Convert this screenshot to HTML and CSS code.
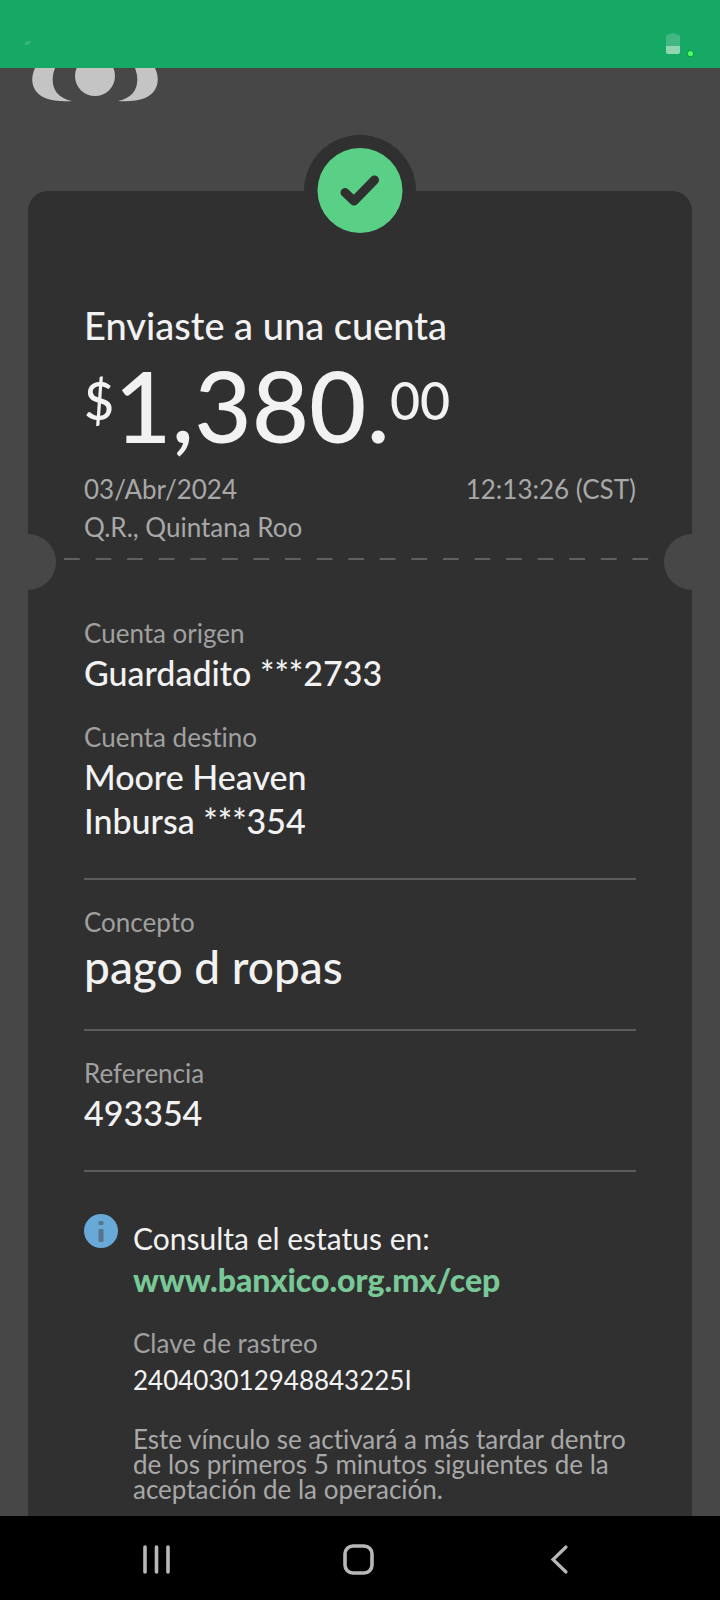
FILE: index.html
```html
<!DOCTYPE html>
<html lang="es">
<head>
<meta charset="utf-8">
<meta name="viewport" content="width=device-width, initial-scale=1">
<title>Comprobante de envío</title>
<link rel="stylesheet" href="styles.css">
</head>
<body>
<header class="status">
  <svg class="status-dot" width="8" height="6" viewBox="0 0 8 6" aria-hidden="true"><path d="M1 2Q5 0 7 1L6 4Q3 6 1 5Z" fill="#37b377"/></svg>
  <svg class="battery" width="30" height="26" viewBox="0 0 30 26" aria-hidden="true">
    <path d="M4 2.500Q4 1 7 1T10 2.500H12Q14 2.500 14 5V14H0V5Q0 2.500 2 2.500Z" fill="#43b783"/>
    <path d="M0 14H14V20Q14 22 12 22H2Q0 22 0 20Z" fill="#8fd6b0"/>
    <circle cx="24.500" cy="21.500" r="3.500" fill="#0da12f"/><circle cx="24.500" cy="21.500" r="2.600" fill="#4dfb69"/>
  </svg>
</header>
<main class="screen">
  <svg class="logo" width="126" height="34" viewBox="0 0 126 34" role="img" aria-label="Logotipo">
    <g fill="#c4c4c4">
      <path d="M3 0H23C18 13 20 29 40 33Q24 34 13 30C1 25-3 13 3 0Z"/>
      <path d="M123 0H103C108 13 106 29 86 33Q102 34 113 30C125 25 129 13 123 0Z"/>
      <circle cx="63" cy="8" r="20"/>
    </g>
  </svg>
  <article class="card">
    <div class="badge">
      <svg width="86" height="86" viewBox="0 0 86 86" role="img" aria-label="Enviado">
        <circle cx="43" cy="42.500" r="42.500" fill="#5ad087"/>
        <path d="M28 44.500L37 53L57.500 32" fill="none" stroke="#303030" stroke-width="9" stroke-linecap="round" stroke-linejoin="round"/>
      </svg>
    </div>
    <h1 class="title">Enviaste a una cuenta</h1>
    <p class="amount"><span class="amount-small">$</span><span class="amount-main">1,380.</span><span class="amount-small">00</span></p>
    <div class="when"><span>03/Abr/2024</span><span>12:13:26 (CST)</span></div>
    <p class="place">Q.R., Quintana Roo</p>
    <div class="perforation"></div>
    <dl class="details">
      <div class="group">
        <div><dt>Cuenta origen</dt><dd>Guardadito ***2733</dd></div>
        <div><dt>Cuenta destino</dt><dd>Moore Heaven</dd><dd>Inbursa ***354</dd></div>
      </div>
      <div class="group"><div><dt>Concepto</dt><dd class="concept">pago d ropas</dd></div></div>
      <div class="group"><div><dt>Referencia</dt><dd>493354</dd></div></div>
    </dl>
    <section class="info">
      <svg width="34" height="34" viewBox="0 0 34 34" aria-hidden="true">
        <circle cx="17" cy="17" r="17" fill="#68a9d8"/>
        <rect x="14.500" y="7" width="5" height="4" rx="1.500" fill="#57758b"/>
        <rect x="14.500" y="15" width="5" height="13" rx="1" fill="#57758b"/>
      </svg>
      <div class="info-body">
        <p class="info-title">Consulta el estatus en:</p>
        <a class="info-link" href="#cep">www.banxico.org.mx/cep</a>
        <p class="key-label">Clave de rastreo</p>
        <p class="key">240403012948843225I</p>
        <p class="note">Este vínculo se activará a más tardar dentro de los primeros 5 minutos siguientes de la aceptación de la operación.</p>
      </div>
    </section>
  </article>
</main>
<nav class="navbar">
  <button type="button" aria-label="Recientes"><svg width="32" height="32" viewBox="0 0 32 32"><path d="M4 3V28M15.500 3V28M27 3V28" stroke="#b8b8b8" stroke-width="3.600" stroke-linecap="round"/></svg></button>
  <button type="button" aria-label="Inicio"><svg width="32" height="32" viewBox="0 0 32 32"><rect x="2" y="2" width="27" height="27" rx="8" fill="none" stroke="#b8b8b8" stroke-width="3.600"/></svg></button>
  <button type="button" aria-label="Atrás"><svg width="32" height="32" viewBox="0 0 32 32"><path d="M22 3L9 15.500L22 28" fill="none" stroke="#b8b8b8" stroke-width="3.200" stroke-linecap="round"/></svg></button>
</nav>
</body>
</html>
```
FILE: styles.css
```css
* { box-sizing: border-box; }
body {
  margin: 0;
  min-height: 100vh;
  display: flex;
  flex-direction: column;
  background: #474747;
  color: #f2f2f2;
  font-family: Lato, "Open Sans", sans-serif;
  font-size: 26px;
  font-variant-ligatures: none;
}
h1, p, dl, dd { margin: 0; }
.status {
  height: 68px;
  padding: 32px 24px 0 24px;
  display: flex;
  justify-content: space-between;
  background: #16a865;
}
.status-dot { margin-top: 8px; }
.screen {
  flex: 1;
  display: flex;
  flex-direction: column;
  padding: 0 28px;
}
.logo { display: block; margin: 0 0 89px 4px; }
.card {
  position: relative;
  flex: 1;
  padding: 111px 56px 12px;
  border-radius: 20px 20px 0 0;
  background: #303030;
}
.badge {
  position: absolute;
  top: -56px;
  left: 50%;
  width: 112px;
  height: 112px;
  margin-left: -56px;
  padding: 13px;
  border-radius: 50%;
  background: #303030;
}
.badge svg { display: block; }
.title { font-size: 38px; line-height: 46px; font-weight: 500; }
.amount {
  display: flex;
  margin-top: 9px;
  font-weight: 500;
}
.amount-main { font-size: 99px; line-height: 96px; }
.amount-small { padding-top: 13px; font-size: 52px; line-height: 60px; }
.when {
  display: flex;
  justify-content: space-between;
  margin-top: 17px;
}
.when, .place { line-height: 38px; color: #a8a8a8; font-weight: 400; }
.perforation {
  position: relative;
  height: 2px;
  margin: 12px -28px 0 -20px;
  background: linear-gradient(90deg, #606060 50%, transparent 50%) 0 0 / 32px 2px round;
}
.perforation::before,
.perforation::after {
  content: "";
  position: absolute;
  top: -24px;
  width: 28px;
  height: 56px;
  background: #474747;
}
.perforation::before { left: -36px; border-radius: 0 28px 28px 0; }
.perforation::after { right: -28px; border-radius: 28px 0 0 28px; }
.details { padding-top: 31px; }
.group {
  display: flex;
  flex-direction: column;
  gap: 24px;
  padding: 24px 0 35px;
  border-bottom: 2px solid #5c5c5c;
}
dt, .key-label { line-height: 36px; color: #a0a0a0; }
dd { font-size: 34px; line-height: 44px; font-weight: 500; }
.concept { font-size: 46px; line-height: 54px; }
.info { display: flex; gap: 15px; padding-top: 42px; }
.info svg { flex: none; }
.info-body { flex: 1; padding-top: 3px; }
.info-title { font-size: 30px; line-height: 42px; }
.info-link {
  display: block;
  font-size: 32px;
  line-height: 42px;
  font-weight: 900;
  color: #79c897;
  text-decoration: none;
}
.key-label { margin-top: 24px; }
.key { line-height: 38px; }
.note { margin-top: 28px; line-height: 25px; color: #a8a8a8; }
.navbar {
  display: flex;
  justify-content: space-between;
  align-items: center;
  height: 84px;
  padding: 4px 144px 0 141px;
  background: #000;
}
.navbar button {
  padding: 0;
  border: 0;
  background: none;
}
.navbar svg { display: block; }
```
